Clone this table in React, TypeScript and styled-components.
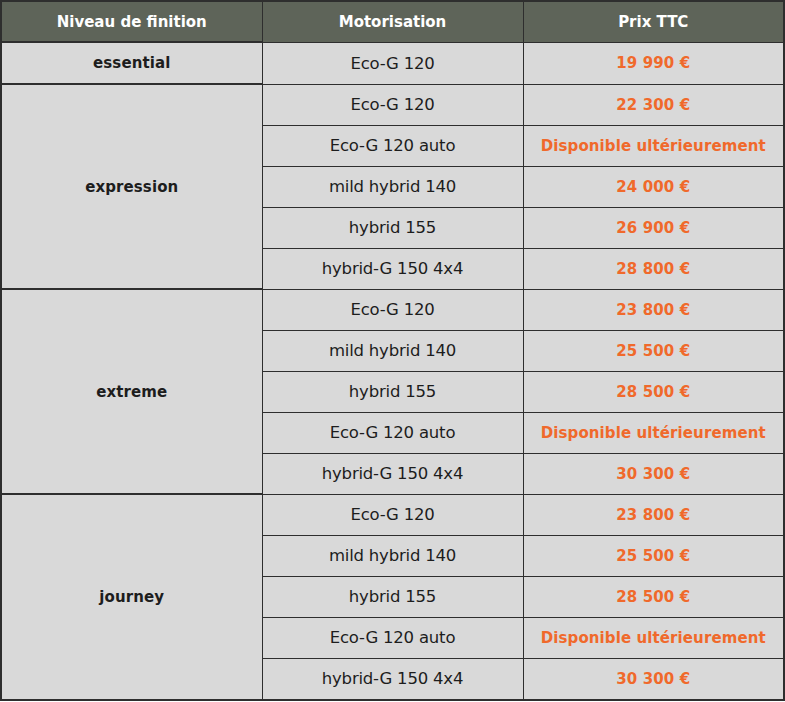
import React from "react";
import styled, { createGlobalStyle } from "styled-components";

const GlobalStyle = createGlobalStyle`
    html, body {
        margin: 0;
        padding: 0;
        background: #ffffff;
    }
    body {
        font-family: "DejaVu Sans", "Noto Sans", sans-serif;
    }
`;

const Table = styled.table`
    width: 785px;
    border-collapse: collapse;
    table-layout: fixed;
    border: 2px solid #2e2e2e;
`;

const HeadCell = styled.th`
    height: 39px;
    padding: 0;
    background: #5e6459;
    color: #ffffff;
    font-size: 15px;
    font-weight: 700;
    text-align: center;
    border: 1px solid #2e2e2e;
`;

const Cell = styled.td<{ $price?: boolean; $trim?: boolean }>`
    height: 40px;
    padding: 0;
    background: #d9d9d9;
    text-align: center;
    font-size: ${ (props) => (props.$price || props.$trim ? "15px" : "16.5px") };
    letter-spacing: ${ (props) => (props.$price || props.$trim ? "0.1px" : "-0.2px") };
    font-weight: ${ (props) => (props.$price || props.$trim ? 700 : 400) };
    color: ${ (props) => (props.$price ? "#f0692b" : "#1d1d1d") };
    border: 1px solid #2e2e2e;
    border-top-width: ${ (props) => (props.$trim ? "2px" : "1px") };
`;

const groups = [
    {
        trim: "essential",
        rows: [["Eco-G 120", "19 990 €"]],
    },
    {
        trim: "expression",
        rows: [
            ["Eco-G 120", "22 300 €"],
            ["Eco-G 120 auto", "Disponible ultérieurement"],
            ["mild hybrid 140", "24 000 €"],
            ["hybrid 155", "26 900 €"],
            ["hybrid-G 150 4x4", "28 800 €"],
        ],
    },
    {
        trim: "extreme",
        rows: [
            ["Eco-G 120", "23 800 €"],
            ["mild hybrid 140", "25 500 €"],
            ["hybrid 155", "28 500 €"],
            ["Eco-G 120 auto", "Disponible ultérieurement"],
            ["hybrid-G 150 4x4", "30 300 €"],
        ],
    },
    {
        trim: "journey",
        rows: [
            ["Eco-G 120", "23 800 €"],
            ["mild hybrid 140", "25 500 €"],
            ["hybrid 155", "28 500 €"],
            ["Eco-G 120 auto", "Disponible ultérieurement"],
            ["hybrid-G 150 4x4", "30 300 €"],
        ],
    },
];

export default function App() {
    return (
        <>
            <GlobalStyle />
            <Table>
                <thead>
                    <tr>
                        <HeadCell>Niveau de finition</HeadCell>
                        <HeadCell>Motorisation</HeadCell>
                        <HeadCell>Prix TTC</HeadCell>
                    </tr>
                </thead>
                <tbody>
                    {groups.map((group) =>
                        group.rows.map(([engine, price], i) => (
                            <tr key={group.trim + i}>
                                {i === 0 && (
                                    <Cell $trim rowSpan={group.rows.length}>
                                        {group.trim}
                                    </Cell>
                                )}
                                <Cell>{engine}</Cell>
                                <Cell $price>{price}</Cell>
                            </tr>
                        ))
                    )}
                </tbody>
            </Table>
        </>
    );
}
